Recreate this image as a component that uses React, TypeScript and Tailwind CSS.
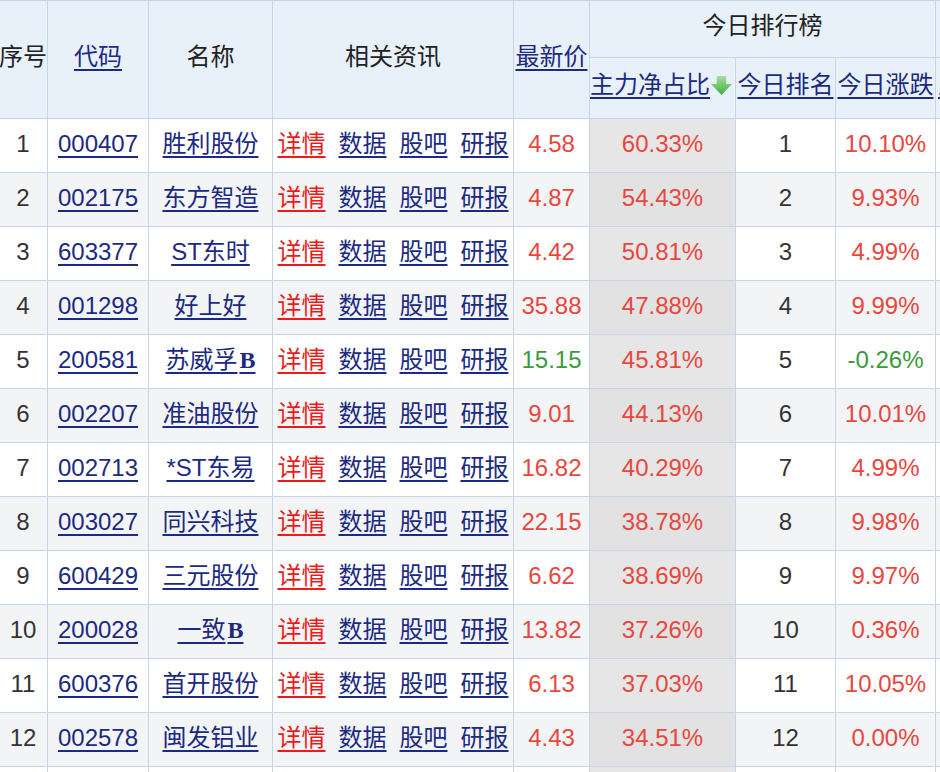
type Row = {
  no: number
  code: string
  name: string
  suffixB?: boolean
  price: string
  ratio: string
  rank: number
  change: string
}

const rows: Row[] = [
  { no: 1, code: '000407', name: '胜利股份', price: '4.58', ratio: '60.33%', rank: 1, change: '10.10%' },
  { no: 2, code: '002175', name: '东方智造', price: '4.87', ratio: '54.43%', rank: 2, change: '9.93%' },
  { no: 3, code: '603377', name: 'ST东时', price: '4.42', ratio: '50.81%', rank: 3, change: '4.99%' },
  { no: 4, code: '001298', name: '好上好', price: '35.88', ratio: '47.88%', rank: 4, change: '9.99%' },
  { no: 5, code: '200581', name: '苏威孚', suffixB: true, price: '15.15', ratio: '45.81%', rank: 5, change: '-0.26%' },
  { no: 6, code: '002207', name: '准油股份', price: '9.01', ratio: '44.13%', rank: 6, change: '10.01%' },
  { no: 7, code: '002713', name: '*ST东易', price: '16.82', ratio: '40.29%', rank: 7, change: '4.99%' },
  { no: 8, code: '003027', name: '同兴科技', price: '22.15', ratio: '38.78%', rank: 8, change: '9.98%' },
  { no: 9, code: '600429', name: '三元股份', price: '6.62', ratio: '38.69%', rank: 9, change: '9.97%' },
  { no: 10, code: '200028', name: '一致', suffixB: true, price: '13.82', ratio: '37.26%', rank: 10, change: '0.36%' },
  { no: 11, code: '600376', name: '首开股份', price: '6.13', ratio: '37.03%', rank: 11, change: '10.05%' },
  { no: 12, code: '002578', name: '闽发铝业', price: '4.43', ratio: '34.51%', rank: 12, change: '0.00%' },
]

const link = 'text-[#1b2a82] underline underline-offset-[4px] decoration-[1.5px]'
const th = 'border border-[#c6d6e8] bg-[#e8f1fa] font-normal text-[#222] p-0 pb-[6px]'
const td = 'border border-[#c6d6e8] p-0 pb-[4px] text-center'

function DownArrow() {
  return (
    <svg width="21" height="21" viewBox="0 0 20 20" className="inline-block align-[-3px] ml-[1px]">
      <defs>
        <linearGradient id="ga" x1="0" y1="0" x2="0" y2="1">
          <stop offset="0" stopColor="#a6e096" />
          <stop offset="1" stopColor="#3fae3f" />
        </linearGradient>
      </defs>
      <path d="M5.5 1h9v7.5H20L10 19 0 8.5h5.5z" fill="url(#ga)" />
    </svg>
  )
}

export default function App() {
  return (
    <div
      className="w-[940px] h-[772px] overflow-hidden bg-white"
      style={{ fontFamily: '"Liberation Sans", "Noto Sans CJK SC", sans-serif' }}
    >
      <table className="table-fixed border-collapse ml-[-2px] w-[1040px] text-[24px] leading-none">
        <colgroup>
          <col className="w-[49px]" />
          <col className="w-[101px]" />
          <col className="w-[124px]" />
          <col className="w-[241px]" />
          <col className="w-[76px]" />
          <col className="w-[146px]" />
          <col className="w-[100px]" />
          <col className="w-[100px]" />
          <col className="w-[103px]" />
        </colgroup>
        <thead>
          <tr className="h-[57px]">
            <th rowSpan={2} className={th}>序号</th>
            <th rowSpan={2} className={th}><span className={link}>代码</span></th>
            <th rowSpan={2} className={th}>名称</th>
            <th rowSpan={2} className={th}>相关资讯</th>
            <th rowSpan={2} className={th}><span className={link}>最新价</span></th>
            <th colSpan={3} className={th}>今日排行榜</th>
            <th className={th}></th>
          </tr>
          <tr className="h-[61px]">
            <th className={th + ' whitespace-nowrap pr-[4px]'}>
              <span className={link}>主力净占比</span>
              <DownArrow />
            </th>
            <th className={th + ' whitespace-nowrap'}><span className={link}>今日排名</span></th>
            <th className={th + ' whitespace-nowrap'}><span className={link}>今日涨跌</span></th>
            <th className={th + ' whitespace-nowrap text-left pl-[2px]'}><span className={link}>主力净占比</span></th>
          </tr>
        </thead>
        <tbody>
          {rows.map((r) => {
            const even = r.no % 2 === 0
            const green = r.change.startsWith('-')
            return (
              <tr key={r.no} className={`h-[54px] ${even ? 'bg-[#f3f4f5]' : 'bg-white'}`}>
                <td className={td + ' text-[#333]'}>{r.no}</td>
                <td className={td}><span className={link}>{r.code}</span></td>
                <td className={td + ' whitespace-nowrap'}>
                  <span className={link}>
                    {r.name}
                    {r.suffixB && (
                      <span className="font-bold ml-[2px]" style={{ fontFamily: '"Liberation Serif", serif' }}>B</span>
                    )}
                  </span>
                </td>
                <td className={td + ' whitespace-nowrap'}>
                  <div className="flex justify-center gap-[13px]">
                    <span className="text-[#ec1c1c] underline underline-offset-[4px] decoration-[1.5px]">详情</span>
                    <span className={link}>数据</span>
                    <span className={link}>股吧</span>
                    <span className={link}>研报</span>
                  </div>
                </td>
                <td className={td + (green ? ' text-[#3c9a3c]' : ' text-[#e8473e]')}>{r.price}</td>
                <td className={td + ' text-[#e8473e] ' + (even ? 'bg-[#e2e2e2]' : 'bg-[#e6e6e6]')}>{r.ratio}</td>
                <td className={td + ' text-[#333]'}>{r.rank}</td>
                <td className={td + (green ? ' text-[#3c9a3c]' : ' text-[#e8473e]')}>{r.change}</td>
                <td className={td}></td>
              </tr>
            )
          })}
          <tr className="h-[54px] bg-white">
            <td className={td}></td>
            <td className={td}></td>
            <td className={td}></td>
            <td className={td}></td>
            <td className={td}></td>
            <td className={td + ' bg-[#e6e6e6]'}></td>
            <td className={td}></td>
            <td className={td}></td>
            <td className={td}></td>
          </tr>
        </tbody>
      </table>
    </div>
  )
}
